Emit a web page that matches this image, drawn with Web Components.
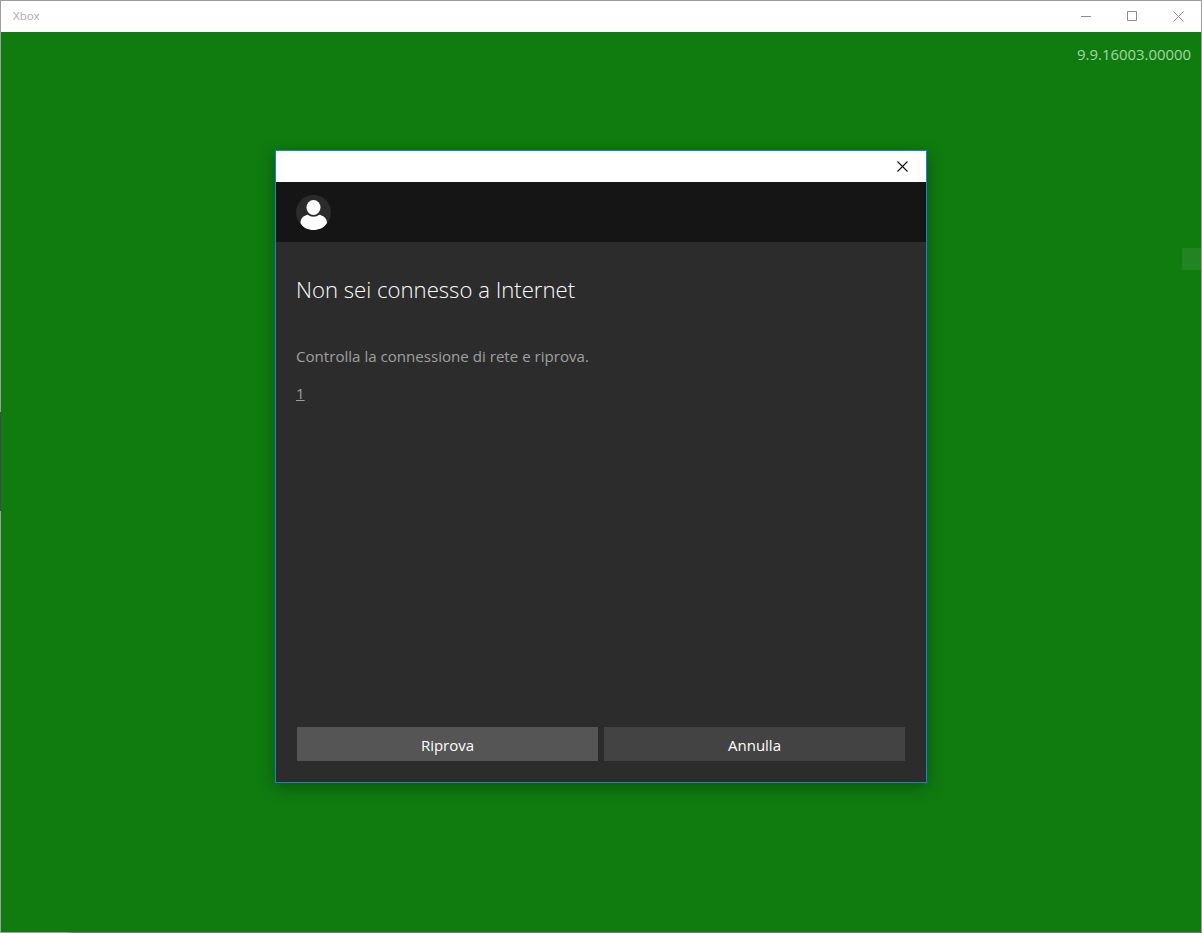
<!DOCTYPE html>
<html lang="it">
<head>
<meta charset="utf-8">
<title>Xbox</title>
<style>
  html, body { margin: 0; height: 100%; background: #107c10; }
  body { font-family: "Open Sans", "Noto Sans", sans-serif; }
</style>
</head>
<body>
<app-window>
  <title-bar slot="bar" label="Xbox"></title-bar>
  <span slot="version">9.9.16003.00000</span>
  <xbox-dialog heading="Non sei connesso a Internet">
    <p>Controlla la connessione di rete e riprova.</p>
    <a>1</a>
    <dialog-button slot="actions" primary>Riprova</dialog-button>
    <dialog-button slot="actions">Annulla</dialog-button>
  </xbox-dialog>
</app-window>

<script>
class appWindow extends HTMLElement {
  constructor() {
    super();
    this.attachShadow({ mode: "open" });
    this.shadowRoot.innerHTML = `
      <style>
        :host {
          display: flex;
          flex-direction: column;
          box-sizing: border-box;
          position: relative;
          width: 1202px;
          height: 933px;
          border: 1px solid #9c9c9c;
          background: #107c10;
        }
        .content {
          position: relative;
          flex: 1;
          display: flex;
          flex-direction: column;
          align-items: center;
          min-height: 0;
        }
        .version {
          align-self: flex-end;
          height: 118px;
          padding: 13px 10px 0 0;
          box-sizing: border-box;
          font: 14.9px/18px "Open Sans", sans-serif;
          color: #a6d5a6;
        }
        .focus-mark {
          position: absolute;
          right: 0;
          top: 216px;
          width: 19px;
          height: 22px;
          background: rgba(255,255,255,.07);
        }
        /* tramos mas oscuros del borde de la ventana */
        .edge { position: absolute; background: #44484c; }
        .edge.left { left: -1px; top: 411px; width: 1px; height: 99px; }
        .edge.bottom { left: 67px; right: -1px; bottom: -1px; height: 1px; background: #7d7d7d; }
      </style>
      <slot name="bar"></slot>
      <div class="content">
        <div class="version"><slot name="version"></slot></div>
        <slot></slot>
        <div class="focus-mark"></div>
      </div>
      <div class="edge left"></div>
      <div class="edge bottom"></div>`;
  }
}

class titleBar extends HTMLElement {
  constructor() {
    super();
    this.attachShadow({ mode: "open" });
  }
  connectedCallback() {
    this.shadowRoot.innerHTML = `
      <style>
        :host {
          display: flex;
          justify-content: space-between;
          height: 31px;
          flex: none;
          background: #fff;
        }
        .label {
          padding: 7px 0 0 12px;
          font: 11.5px/16px "Open Sans", sans-serif;
          color: #ababab;
        }
        .controls { display: flex; }
        .controls div {
          width: 46px;
          height: 30px;
          display: flex;
          align-items: center;
          justify-content: center;
        }
        svg { display: block; fill: none; stroke: #8c8c8c; stroke-width: 1; }
      </style>
      <span class="label">${this.getAttribute("label")}</span>
      <div class="controls">
        <div><svg width="10" height="10"><path d="M0 5.5h10"/></svg></div>
        <div><svg width="10" height="10"><path d="M.5.5h9v9h-9z"/></svg></div>
        <div><svg width="11" height="11"><path d="M.5.5l10 10M10.500.5l-10 10"/></svg></div>
      </div>`;
  }
}

class xboxDialog extends HTMLElement {
  constructor() {
    super();
    this.attachShadow({ mode: "open" });
  }
  connectedCallback() {
    this.shadowRoot.innerHTML = `
      <style>
        :host {
          display: flex;
          flex-direction: column;
          box-sizing: border-box;
          width: 652px;
          height: 633px;
          flex: none;
          border: 1px solid #0f83e6;
          background: #2c2c2c;
          box-shadow: 0 4px 16px rgba(0,0,0,.32);
        }
        .top {
          height: 31px;
          flex: none;
          background: #fff;
          display: flex;
          align-items: center;
          justify-content: flex-end;
          padding-right: 18px;
        }
        .top svg { display: block; fill: none; stroke: #111; stroke-width: 1.1; }
        .account {
          height: 60px;
          flex: none;
          background: #151515;
          display: flex;
          align-items: center;
          padding-left: 20px;
        }
        .body {
          flex: 1;
          padding: 29px 20px 0;
          color: #a0a0a0;
          font: 15.1px/20px "Open Sans", sans-serif;
        }
        h1 {
          margin: 0 0 39px;
          font: 300 22.15px/36px "Open Sans", sans-serif;
          color: #fff;
        }
        ::slotted(p) { margin: 0 0 17px; }
        ::slotted(a) { text-decoration: underline; }
        .actions {
          display: flex;
          gap: 6px;
          padding: 0 21px 21px;
        }
      </style>
      <div class="top"><svg width="11" height="11"><path d="M.5.5l10 10M10.500.5l-10 10"/></svg></div>
      <div class="account">
        <svg width="35" height="35" viewBox="0 0 35 35">
          <circle cx="17.500" cy="17.500" r="17.500" fill="#2b2b2b"/>
          <ellipse cx="17.500" cy="12.500" rx="7" ry="7.500" fill="#fff"/>
          <path d="M4.500 28C4.500 23 8 20.500 12 19.800 14 22.300 21 22.300 23 19.800 27 20.500 31 23 31 28 28 33 22.500 35 17.500 35 12.500 35 7 33 4.500 28z" fill="#fff"/>
        </svg>
      </div>
      <div class="body">
        <h1>${this.getAttribute("heading")}</h1>
        <slot></slot>
      </div>
      <div class="actions"><slot name="actions"></slot></div>`;
  }
}

class dialogButton extends HTMLElement {
  constructor() {
    super();
    this.attachShadow({ mode: "open" });
    this.shadowRoot.innerHTML = `
      <style>
        :host {
          flex: 1;
          display: flex;
          align-items: center;
          justify-content: center;
          box-sizing: border-box;
          height: 34px;
          padding-top: 2px;
          background: #434343;
          color: #fff;
          font: 15px "Open Sans", sans-serif;
        }
        :host([primary]) { background: #555; }
      </style>
      <slot></slot>`;
  }
}

customElements.define("app-window", appWindow);
customElements.define("title-bar", titleBar);
customElements.define("xbox-dialog", xboxDialog);
customElements.define("dialog-button", dialogButton);
</script>
</body>
</html>
